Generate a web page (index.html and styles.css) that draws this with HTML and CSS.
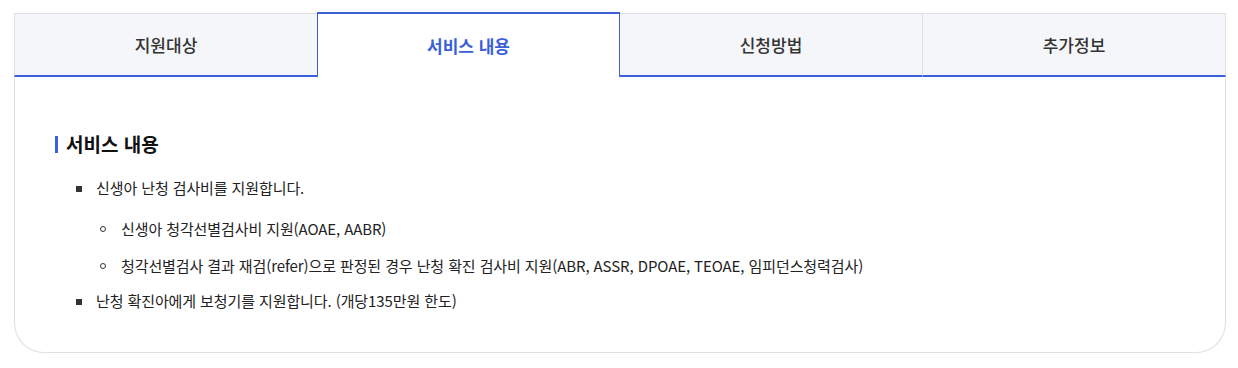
FILE: index.html
```html
<!DOCTYPE html>
<html lang="ko">
<head>
    <meta charset="UTF-8">
    <meta name="viewport" content="width=device-width, initial-scale=1.0">
    <title>서비스 내용</title>
    <link rel="stylesheet" href="styles.css">
</head>
<body>
    <div class="tab-box">
        <ul class="tabs">
            <li class="tab">지원대상</li>
            <li class="tab active">서비스 내용</li>
            <li class="tab">신청방법</li>
            <li class="tab">추가정보</li>
        </ul>

        <div class="tab-content">
            <h3 class="section-title">서비스 내용</h3>
            <ul class="dot-list">
                <li>신생아 난청 검사비를 지원합니다.
                    <ul class="sub-list">
                        <li>신생아 청각선별검사비 지원(AOAE, AABR)</li>
                        <li>청각선별검사 결과 재검(refer)으로 판정된 경우 난청 확진 검사비 지원(ABR, ASSR, DPOAE, TEOAE, 임피던스청력검사)</li>
                    </ul>
                </li>
                <li>난청 확진아에게 보청기를 지원합니다. (개당135만원 한도)</li>
            </ul>
        </div>
    </div>
</body>
</html>
```

FILE: styles.css
```css
:root {
    --main-blue: #3b5fd8;
    --line: #dddfe3;
    --tab-bg: #f5f6fa;
    --text: #222;
}

body {
    margin: 0;
    padding: 13px 12px 14px 14px;
    font-family: "Noto Sans CJK KR", "Noto Sans", sans-serif;
    color: var(--text);
    background: #fff;
}

.tab-box {
    width: 1212px;
}

.tabs {
    display: grid;
    grid-template-columns: repeat(4, 1fr);
    margin: 0;
    padding: 0;
    list-style: none;
}

.tab {
    height: 61px;
    display: flex;
    align-items: center;
    justify-content: center;
    background: var(--tab-bg);
    border-top: 1px solid var(--line);
    border-right: 1px solid var(--line);
    border-bottom: 2px solid var(--main-blue);
    font-size: 17px;
    font-weight: 500;
    color: #333;
}

.tab:first-child {
    border-left: 1px solid var(--line);
}

.tab.active {
    height: 62px;
    margin-top: -1px;
    background: #fff;
    border: 1px solid var(--main-blue);
    border-top: 2px solid var(--main-blue);
    border-bottom: 2px solid #fff;
    color: var(--main-blue);
    font-weight: 700;
}

.tab:nth-child(1) {
    border-right: none;
}

.tab:nth-child(2) + .tab {
    border-left: none;
}

.tab-content {
    border: 1px solid var(--line);
    border-top: none;
    border-radius: 0 0 30px 30px;
    padding: 53px 40px 39px;
}

.section-title {
    margin: 0 0 19px;
    padding-left: 11px;
    position: relative;
    font-size: 19px;
    line-height: 26px;
    font-weight: 700;
    color: #111;
}

.section-title::before {
    content: '';
    position: absolute;
    left: 0;
    top: 5px;
    width: 3px;
    height: 17px;
    background: var(--main-blue);
}

.dot-list {
    margin: 0 0 0 21px;
    padding: 0;
    list-style: none;
}

.dot-list > li {
    position: relative;
    padding-left: 20px;
    font-size: 15px;
    line-height: 24px;
    letter-spacing: -0.1px;
}

.dot-list > li + li {
    margin-top: 11px;
}

.dot-list > li::before {
    content: '';
    position: absolute;
    left: 0;
    top: 10px;
    width: 6px;
    height: 6px;
    background: #333;
}

.sub-list {
    margin: 17px 0 0 4px;
    padding: 0;
    list-style: none;
}

.sub-list li {
    position: relative;
    padding-left: 21px;
}

.sub-list li + li {
    margin-top: 13px;
}

.sub-list li::before {
    content: '';
    position: absolute;
    left: 0;
    top: 9px;
    width: 4px;
    height: 4px;
    border: 1px solid #333;
    border-radius: 50%;
}
```
